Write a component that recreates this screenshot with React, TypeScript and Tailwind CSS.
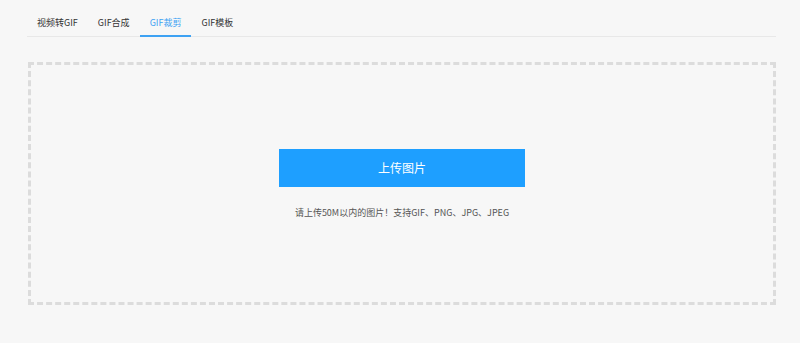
import React from "react";

const tabs = ["视频转GIF", "GIF合成", "GIF裁剪", "GIF模板"];

export default function App() {
  const active = 2;
  return (
    <div className="w-[800px] h-[343px] bg-[#f7f7f7] [font-family:'Noto_Sans_CJK_SC','Noto_Sans',sans-serif] overflow-hidden">
      <div className="ml-[27px] w-[749px] pt-[9px]">
        {/* Tabs */}
        <ul className="flex border-b border-[#e8e8e8] h-[28px]">
          {tabs.map((t, i) => (
            <li
              key={t}
              className={
                "relative px-[10px] text-[9px] leading-[28px] cursor-pointer " +
                (i === active ? "text-[#3ea2f3]" : "text-[#333]")
              }
            >
              {t}
              {i === active && (
                <span className="absolute left-0 right-0 -bottom-[1px] h-[2px] bg-[#3ea2f3]" />
              )}
            </li>
          ))}
        </ul>

        {/* Upload area */}
        <div className="mt-[25px] ml-[1px] w-[748px] h-[243px] border-[3px] border-dashed border-[#dcdcdc] flex flex-col items-center">
          <button className="mt-[84px] w-[246px] h-[38px] bg-[#1e9fff] text-white text-[12px] [font-family:'Noto_Sans_CJK_SC',sans-serif]">
            上传图片
          </button>
          <p className="mt-[19px] text-[9px] text-[#555] leading-[14px]">
            请上传50M以内的图片！支持GIF、PNG、JPG、JPEG
          </p>
        </div>
      </div>
    </div>
  );
}
